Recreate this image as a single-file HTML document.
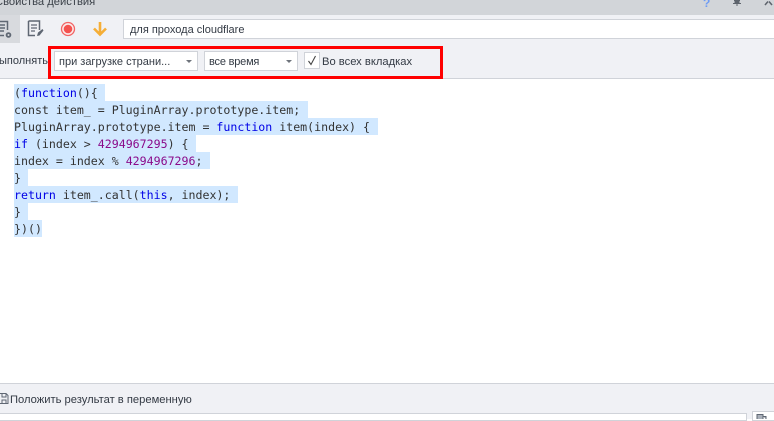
<!DOCTYPE html>
<html><head><meta charset="utf-8">
<style>
html,body{margin:0;padding:0}
body{width:774px;height:419px;position:relative;overflow:hidden;background:#fff;font-family:"Liberation Sans","DejaVu Sans",sans-serif;font-size:11px;color:#333a44}
.a{position:absolute;white-space:nowrap}
.dd{position:absolute;background:#fff;border:1px solid #d0d3d9;box-sizing:border-box;height:20px;line-height:20px;padding-left:4px;top:51px;font-size:11px;color:#333a44}
.dd i{position:absolute;right:5px;top:8px;width:0;height:0;border:3px solid transparent;border-top:3px solid #6f747c;border-bottom:0}
.sel{position:absolute;left:14px;height:17px;background:#d1e8ff}
.ln{position:absolute;left:14px;height:17px;margin-top:1px;line-height:17px;font-family:"DejaVu Sans Mono","Liberation Mono",monospace;font-size:11.6px;color:#333;white-space:pre}
.k{color:#0000e6}.n{color:#8a0a8a}
</style></head><body>
<div class="a" style="left:0;top:0;width:774px;height:15px;background:#d2d5d9"></div>
<div class="a" style="left:-5px;top:-5px;font-size:11.2px;line-height:15px;color:#3a4048">Свойства действия</div>
<div class="a" style="left:703px;top:-4px;font-size:12px;font-weight:bold;line-height:14px;color:#6d9bf5">?</div>
<svg class="a" style="left:731px;top:0" width="12" height="7"><path d="M3 0H9V1H8.500V3H10V4H6.500V6H5.500V4H2V3H3.500V1H3Z" fill="#5d636c"/></svg>
<svg class="a" style="left:764px;top:0" width="10" height="6"><path d="M1 5L4 1.500M8 5L5 1.500" stroke="#5d636c" stroke-width="1.500" fill="none"/></svg>

<div class="a" style="left:0;top:15px;width:774px;height:64px;background:#f0f1f5"></div>
<div class="a" style="left:0;top:15px;width:20px;height:28px;background:#d8dade"></div>

<svg class="a" style="left:0;top:20px" width="14" height="19"><path d="M0 1.500H7.500V10M0 15.500H4M0 5H5M0 8H5M0 11H4" stroke="#5f6773" stroke-width="1.500" fill="none"/><circle cx="8.500" cy="15" r="2.800" fill="#5f6773"/><circle cx="8.500" cy="15" r="1" fill="#d8dade"/></svg>
<svg class="a" style="left:27px;top:20px" width="18" height="19"><path d="M1.500 1H12.500V10M1.500 1V15.500H8" stroke="#5f6773" stroke-width="1.500" fill="none"/><path d="M4 5H10M4 8H10M4 11H8" stroke="#5f6773" stroke-width="1.300"/><path d="M10 16L11 12.500L15.500 9L16.500 10.500L12.500 15.500Z" fill="#5f6773"/></svg>
<svg class="a" style="left:60px;top:21px" width="16" height="16"><circle cx="8" cy="8" r="6.500" fill="#fbeaea" stroke="#f26464" stroke-width="1.300"/><circle cx="8" cy="8" r="4.300" fill="#f4524f"/></svg>
<svg class="a" style="left:92px;top:21px" width="16" height="16"><path d="M8 1V13M2 7.500L8 13.500L14 7.500" stroke="#f5ae36" stroke-width="2.600" fill="none"/></svg>

<div class="a" style="left:123px;top:19px;width:651px;height:20px;box-sizing:border-box;background:#fff;border:1px solid #d0d3d9;border-right:0;line-height:20px;padding-left:6px;font-size:11px;color:#333a44">для прохода cloudflare</div>

<div class="a" style="left:-1px;top:54px;line-height:14px;font-size:11px;color:#333a44">ыполнять</div>
<div class="dd" style="left:54px;width:144px">при загрузке страни...<i></i></div>
<div class="dd" style="left:204px;width:94px;letter-spacing:-.2px">все время<i></i></div>
<div class="a" style="left:304px;top:52px;width:16px;height:17px;box-sizing:border-box;background:#fff;border:1px solid #d0d3d9"></div>
<svg class="a" style="left:304px;top:52px" width="16" height="17"><path d="M4.500 9L7 12.500L11.500 4" stroke="#444" stroke-width="1.100" fill="none"/></svg>
<div class="a" style="left:322px;top:55px;line-height:14px;font-size:11.2px;color:#333a44">Во всех вкладках</div>

<div class="a" style="left:48px;top:46px;width:395px;height:33px;box-sizing:border-box;border:3px solid #f00"></div>
<div class="a" style="left:0;top:78px;width:48px;height:1px;background:#d0d3d9"></div>
<div class="a" style="left:443px;top:78px;width:331px;height:1px;background:#d0d3d9"></div>

<div class="sel" style="top:84px;width:91px"></div>
<div class="sel" style="top:101px;width:294px"></div>
<div class="sel" style="top:118px;width:364px"></div>
<div class="sel" style="top:135px;width:182px"></div>
<div class="sel" style="top:152px;width:196px"></div>
<div class="sel" style="top:169px;width:14px"></div>
<div class="sel" style="top:186px;width:224px"></div>
<div class="sel" style="top:203px;width:14px"></div>
<div class="sel" style="top:220px;width:28px"></div>
<div class="ln" style="top:84px">(<span class="k">function</span>(){</div>
<div class="ln" style="top:101px">const item_ = PluginArray.prototype.item;</div>
<div class="ln" style="top:118px">PluginArray.prototype.item = <span class="k">function</span> item(index) {</div>
<div class="ln" style="top:135px"><span class="k">if</span> (index &gt; <span class="n">4294967295</span>) {</div>
<div class="ln" style="top:152px">index = index % <span class="n">4294967296</span>;</div>
<div class="ln" style="top:169px">}</div>
<div class="ln" style="top:186px"><span class="k">return</span> item_.call(<span class="k">this</span>, index);</div>
<div class="ln" style="top:203px">}</div>
<div class="ln" style="top:220px">})()</div>

<div class="a" style="left:0;top:383px;width:774px;height:36px;box-sizing:border-box;background:#f0f1f5;border-top:1px solid #d0d3d9"></div>
<svg class="a" style="left:0;top:392px" width="9" height="13"><path d="M0 1.500H6L8 3.500V11.500H0M2 1.500V5H6V1.500M2 11.500V8H6V11.500" stroke="#5f6773" fill="none"/></svg>
<div class="a" style="left:10px;top:393px;line-height:14px;font-size:11.2px;color:#333a44">Положить результат в переменную</div>
<div class="a" style="left:0;top:413px;width:747px;height:8px;box-sizing:border-box;background:#fff;border:1px solid #d0d3d9;border-left:0"></div>
<div class="a" style="left:752px;top:411px;width:24px;height:10px;box-sizing:border-box;background:#fff;border:1px solid #d0d3d9"></div>
<svg class="a" style="left:756px;top:414px" width="12" height="5"><path d="M1 5V.500H7V5M7 2.500H10V5" stroke="#5f6773" fill="#aab0ba"/></svg>
</body></html>
